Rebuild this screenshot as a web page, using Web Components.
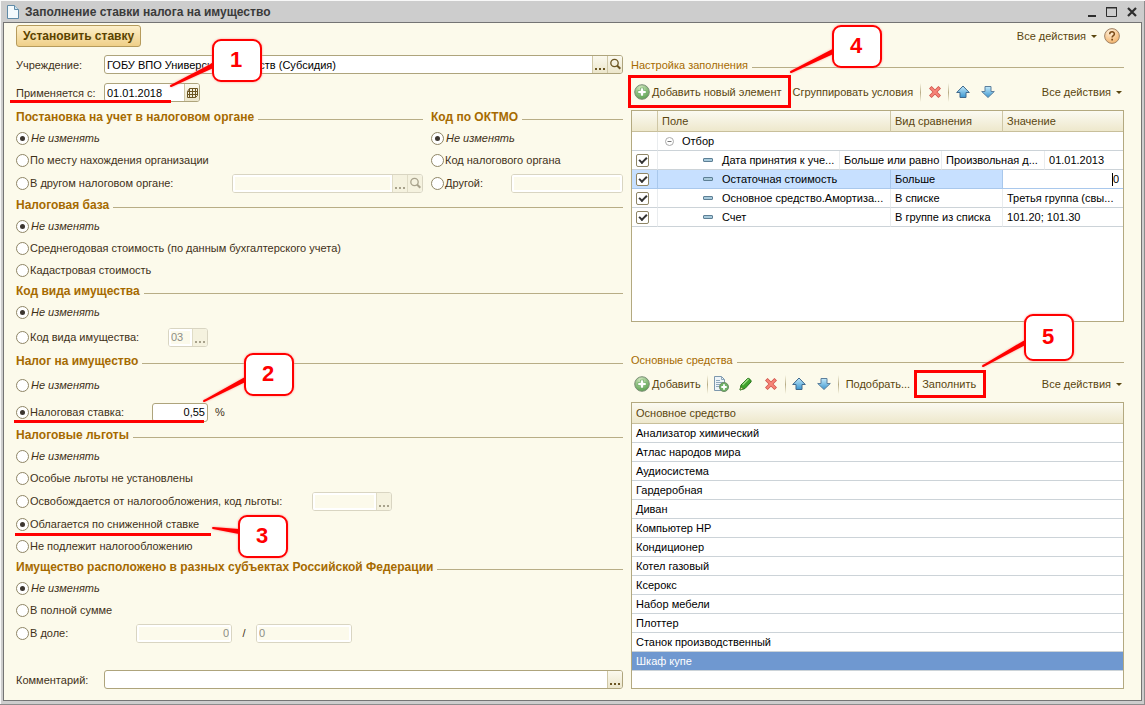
<!DOCTYPE html>
<html lang="ru">
<head>
<meta charset="utf-8">
<title>Заполнение ставки налога на имущество</title>
<style>
  body { margin: 0; font: 11px/14px "Liberation Sans", Arial, sans-serif; color: #3f3118; }
</style>
</head>
<body>
<tax-rate-page></tax-rate-page>

<script>
const ICONS = {
  page: '<svg width="16" height="16" viewBox="0 0 16 16"><path d="M2.500 1.500h7l4 4v9h-11z" fill="#f4fafd" stroke="#5f8ba8"/><path d="M9.500 1.500v4h4" fill="#cfe3ee" stroke="#5f8ba8"/></svg>',
  add: '<svg width="16" height="16" viewBox="0 0 16 16"><defs><radialGradient id="g" cx=".4" cy=".2" r=".9"><stop offset="0" stop-color="#cfe6bd"/><stop offset="1" stop-color="#4f9a45"/></radialGradient></defs><circle cx="8" cy="8" r="7.300" fill="url(#g)" stroke="#7d8f78"/><path d="M8 3.800v8.400M3.800 8h8.400" stroke="#4f9a45" stroke-width="3.600"/><path d="M8 4.200v7.600M4.200 8h7.600" stroke="#fff" stroke-width="2.600"/></svg>',
  copy: '<svg width="16" height="16" viewBox="0 0 16 16"><path d="M1.500.500h7l3 3v11h-10z" fill="#eef4f8" stroke="#7d98ad"/><path d="M8.500.500v3h3M3 4.500h4M3 6.500h7M3 8.500h6M3 10.500h3" fill="none" stroke="#8fa9bb"/><circle cx="11" cy="11" r="4.500" fill="#6fb266" stroke="#6d8b68"/><path d="M11 8.300v5.400M8.300 11h5.400" stroke="#fff" stroke-width="1.800"/></svg>',
  edit: '<svg width="16" height="16" viewBox="0 0 16 16"><path d="M2 14l1-5 6.500-6.500c1-1 4.500 2 3.500 3.500L7 12.500z" fill="#3fa32b" stroke="#26711a"/><path d="M4.500 9l6-6" stroke="#9bdc83" stroke-width="1.500"/><path d="M2 14l.8-3.200 2.600 2.200z" fill="#f0dca0" stroke="#26711a" stroke-width=".6"/></svg>',
  del: '<svg width="16" height="16" viewBox="0 0 16 16"><path d="M3.300 3.300l9.400 9.400M12.700 3.300l-9.400 9.400" stroke="#cf5249" stroke-width="3.600"/><path d="M3.800 3.800l8.400 8.400M12.200 3.800l-8.400 8.400" stroke="#f78478" stroke-width="2.200"/></svg>',
  up: '<svg width="16" height="16" viewBox="0 0 16 16"><defs><linearGradient id="u" x2="0" y2="1"><stop offset="0" stop-color="#c4eafa"/><stop offset="1" stop-color="#3b96d0"/></linearGradient></defs><path d="M8 2l6.300 6.500H11V13.500H5V8.500H1.700z" fill="url(#u)" stroke="#40698c"/></svg>',
  down: '<svg width="16" height="16" viewBox="0 0 16 16"><defs><linearGradient id="d" x2="0" y2="1"><stop offset="0" stop-color="#c4eafa"/><stop offset="1" stop-color="#3b96d0"/></linearGradient></defs><path d="M8 13.500l6.300-6H11V2.500H5v5H1.700z" fill="url(#d)" stroke="#5c7f9c"/></svg>',
  search: '<svg width="13" height="13" viewBox="0 0 13 13"><circle cx="5.500" cy="5" r="3.700" fill="none" stroke="currentColor" stroke-width="1.300"/><path d="M8 7.500l3.300 3.300" stroke="currentColor" stroke-width="2"/></svg>',
  calendar: '<svg width="11" height="12" viewBox="0 0 11 12"><path d="M2.500 1.500h8v7l-2 2h-8v-6zM.500 4.500h10M.500 7.500h10M2.500 1.500v9M5.500 1.500v9M8.500 1.500v9" fill="none" stroke="#6b5522"/></svg>',
  more: '<svg width="11" height="13" viewBox="0 0 11 13"><path d="M0 10h2v2H0zM4 10h2v2H4zM8 10h2v2H8z" fill="currentColor"/></svg>',
  help: '<svg width="16" height="16" viewBox="0 0 16 16"><defs><radialGradient id="h" cx=".4" cy=".25" r=".9"><stop offset="0" stop-color="#fff1dc"/><stop offset="1" stop-color="#f0a755"/></radialGradient></defs><circle cx="8" cy="8" r="7.400" fill="url(#h)" stroke="#a08468"/><path d="M5.700 6.300c0-3.200 4.700-3.200 4.700-.4 0 1.700-2.300 1.700-2.300 3.600" fill="none" stroke="#7c4b18" stroke-width="1.500"/><path d="M7.300 10.800h1.700v1.700H7.300z" fill="#7c4b18"/></svg>',
  minimize: '<svg width="12" height="12" viewBox="0 0 12 12"><path d="M2 9h8v2H2z" fill="#2d2d2d"/></svg>',
  maximize: '<svg width="12" height="12" viewBox="0 0 12 12"><path d="M.500 1.500h10v9H.500z" fill="none" stroke="#2d2d2d"/><path d="M0 1h11v1.500H0z" fill="#2d2d2d"/></svg>',
  close: '<svg width="12" height="12" viewBox="0 0 12 12"><path d="M2 2l8 8M10 2l-8 8" stroke="#2d2d2d" stroke-width="2.200"/></svg>'
};

const RESET = `
  *, *::before, *::after { box-sizing: border-box; }
  button { font: inherit; color: inherit; margin: 0; padding: 0; border: 0; background: none; white-space: nowrap; }
  input { font: inherit; color: inherit; margin: 0; }
  svg { display: block; flex: none; }
`;

class Base extends HTMLElement {
  connectedCallback() {
    if (this.shadowRoot) return;
    this.attachShadow({ mode: "open" }).innerHTML = `<style>${RESET}${this.css()}</style>${this.html()}`;
    this.ready();
  }
  ready() {}
  attr(name, fallback = "") { return this.getAttribute(name) ?? fallback; }
}

/* Window frame with a title bar */
customElements.define("app-window", class extends Base {
  css() { return `
    :host { display: flex; flex-direction: column; box-sizing: border-box; min-height: 100vh; padding: 0 3px 3px; background: #cdcdcd;
      border: 1px solid #8c8c8c; border-width: 0 0 1px; box-shadow: inset 1px 1px #f8f8f8, inset -1px 0 #8c8c8c; }
    header { display: flex; align-items: center; height: 22px; padding: 2px 4px 0 2px; gap: 4px; }
    h1 { flex: 1; margin: 0; font-size: 12px; line-height: 16px; font-weight: bold; color: #3a3a3a; }
    nav { display: flex; gap: 8px; }
    main { flex: 1; display: flex; flex-direction: column; background: #fcfaeb; border: 1px solid #747474; padding: 2px 17px 11px 12px; }`; }
  html() { return `
    <header>${ICONS.page}<h1>${this.attr("caption")}</h1>
      <nav><button aria-label="Свернуть">${ICONS.minimize}</button><button aria-label="Развернуть">${ICONS.maximize}</button><button aria-label="Закрыть">${ICONS.close}</button></nav>
    </header><main><slot></slot></main>`; }
});

/* Section caption followed by a rule */
customElements.define("form-group", class extends Base {
  css() { return `
    :host { display: flex; flex-direction: column; min-width: 0; }
    h2 { display: flex; align-items: center; gap: 4px; margin: 0; height: 20px; font-size: 12px; line-height: 16px; color: #a66a00; white-space: nowrap; }
    h2::after { content: ""; flex: 1; height: 1px; margin-top: 4px; background: #b8ad86; }
    :host([plain]) h2 { font-size: 11px; font-weight: normal; }`; }
  html() { return `<h2>${this.attr("caption")}</h2><slot></slot>`; }
});

customElements.define("radio-row", class extends Base {
  css() { return `
    :host { display: flex; align-items: center; height: 22px; }
    :host([size="field"]) { height: 24px; }
    :host([size="medium"]) { height: 26px; }
    :host([size="large"]) { height: 28px; }
    label { display: flex; align-items: center; gap: 1px; flex: none; width: var(--label, auto); white-space: nowrap; }
    :host([italic]) label { font-style: italic; gap: 2px; }
    input { appearance: none; width: 13px; height: 13px; border: 1px solid #8f8666; border-radius: 50%; background: #fff; display: grid; place-items: center; }
    input:checked::before { content: ""; width: 5px; height: 5px; border-radius: 50%; background: #3c3630; }
    ::slotted(span) { width: 24px; text-align: center; }`; }
  html() { return `<label><input type="radio" ${this.hasAttribute("checked") ? "checked" : ""}><span>${this.attr("label")}</span></label><slot></slot>`; }
  ready() {
    this.input = this.shadowRoot.querySelector("input");
    this.input.addEventListener("change", () => {
      for (const row of this.parentElement.querySelectorAll(":scope > radio-row")) if (row !== this) row.input.checked = false;
    });
  }
});

customElements.define("text-field", class extends Base {
  css() { return `
    :host { display: flex; align-items: center; min-width: 0; }
    label { flex: none; width: 88px; }
    .box { flex: 1; min-width: 0; display: flex; height: 19px; border: 1px solid #aea47c; border-radius: 3px; background: #fff; overflow: hidden; }
    input { flex: 1; width: 0; min-width: 0; border: 0; padding: 0 2px; outline: 0; background: none; color: #000; }
    :host([align="end"]) input { text-align: right; }
    button { flex: none; width: 15px; display: grid; place-items: center; color: #6b5522; border-left: 1px solid #cfc7a6; background: linear-gradient(#fbf9ee, #ece6cb); }
    :host([disabled]) .box { border-color: #d9d5c2; }
    :host([disabled]) input { color: #8d8d86; background: #fcfaeb; border: 2px solid #fff; padding: 0; }
    :host([disabled]) button { color: #a8a28c; background: #f5f2df; border-color: #e0dcc6; }`; }
  html() {
    const dis = this.hasAttribute("disabled") ? "disabled" : "";
    const names = { more: "Выбрать", search: "Открыть", calendar: "Календарь" };
    const buttons = this.attr("buttons").split(" ").filter(Boolean).map(b => `<button ${dis} aria-label="${names[b]}">${ICONS[b]}</button>`).join("");
    const label = this.attr("label");
    return `${label ? `<label for="f">${label}</label>` : ""}<div class="box"><input id="f" type="text" value="${this.attr("value")}" ${label ? "" : `aria-label="${this.attr("name")}"`} ${dis}>${buttons}</div>`;
  }
});

customElements.define("tool-button", class extends Base {
  css() { return `
    :host { display: flex; color: #5a460f; }
    button { display: flex; align-items: center; justify-content: center; height: 24px; padding: 0 6px; gap: 2px; }
    :host([icon]) button { padding: 0 5px 0 3px; }
    :host([icon]:not([label])) button { width: 25px; padding: 0; }
    :host([menu]) button { padding: 0 2px; gap: 5px; }
    :host([menu]) button::after { content: ""; border: 3px solid transparent; border-top-color: #5a460f; border-bottom: 0; }
    :host([main]) button { height: 22px; padding: 0 6px; font-size: 12px; font-weight: bold; color: #5a4300; border: 1px solid #b69b5c; border-radius: 3px; background: linear-gradient(#fdf0cb, #efcf88); }`; }
  html() { return `<button ${this.hasAttribute("label") ? "" : `aria-label="${this.attr("name")}"`}>${ICONS[this.attr("icon")] || ""}${this.attr("label")}</button>`; }
});

customElements.define("tool-bar", class extends Base {
  css() { return `
    :host { display: flex; align-items: center; height: 28px; margin-bottom: 4px; }
    ::slotted(hr) { width: 1px; height: 19px; margin: 0 1px; border: 0; background: linear-gradient(transparent, #b8ad86, transparent); }
    ::slotted([menu]) { margin-left: auto; }`; }
  html() { return `<slot></slot>`; }
});

const TABLE = `
  :host { display: block; box-sizing: border-box; border: 1px solid #b3a980; background: #fff; color: #000; }
  table { width: 100%; table-layout: fixed; border-spacing: 0; }
  th, td { height: 19px; padding: 0 0 0 4px; text-align: left; font-weight: normal; white-space: nowrap; border-bottom: 1px solid #ccd3d8; }
  th { height: 21px; color: #5a460f; background: linear-gradient(#fbfaf2, #eee8cc); border-color: #c8bf9b; }
`;

customElements.define("filter-table", class extends Base {
  css() { return TABLE + `
    th + th { border-left: 1px solid #cfc7a6; }
    td + td { border-left: 1px solid #e9ecee; }
    td:first-child { line-height: 0; }
    tr.sel td { background: #c7e0ff; border-color: #a9c8ec; }
    .group { display: flex; align-items: center; gap: 8px; padding-left: 3px; }
    .item { padding-left: 45px; }
    .item::before { content: ""; display: inline-block; width: 10px; height: 4px; margin-right: 9px; vertical-align: 2px; border: 1px solid #5d7f95; border-radius: 1px; background: #a9cbdc; }
    input[type=checkbox] { appearance: none; width: 13px; height: 13px; border: 1px solid #8f8666; border-radius: 2px; background: #fff; display: grid; place-items: center; }
    input[type=checkbox]:checked::before { content: ""; width: 8px; height: 5px; border: 2px solid #333; border-width: 0 0 2px 2px; transform: translateY(-1px) rotate(-45deg); }
    tr.sel td.edit { background: #fff; padding-right: 4px; }
    .edit div { display: flex; justify-content: flex-end; align-items: center; }
    .edit div::before { content: ""; width: 1px; height: 13px; background: #000; }
    .edit input { width: 6px; border: 0; padding: 0; height: 14px; }`; }
  html() {
    const check = n => `<td><input type="checkbox" checked aria-label="${n}"></td>`;
    return `<table>
      <colgroup><col style="width:25px"><col style="width:182px"><col style="width:51px"><col style="width:51px"><col style="width:61px"><col style="width:42px"><col></colgroup>
      <thead><tr><th></th><th colspan="2">Поле</th><th colspan="2">Вид сравнения</th><th colspan="2">Значение</th></tr></thead>
      <tbody>
        <tr><td></td><td colspan="6"><div class="group"><svg width="9" height="9" viewBox="0 0 9 9"><circle cx="4.500" cy="4.500" r="4" fill="#fff" stroke="#aaa"/><path d="M2.500 4.500h4" stroke="#777"/></svg>Отбор</div></td></tr>
        <tr>${check("Дата принятия к учету")}<td class="item">Дата принятия к уче...</td><td colspan="2">Больше или равно</td><td colspan="2">Произвольная д...</td><td>01.01.2013</td></tr>
        <tr class="sel">${check("Остаточная стоимость")}<td class="item" colspan="2">Остаточная стоимость</td><td colspan="2">Больше</td><td class="edit" colspan="2"><div><input type="text" value="0" aria-label="Значение"></div></td></tr>
        <tr>${check("Основное средство.Амортизационная группа")}<td class="item" colspan="2">Основное средство.Амортиза...</td><td colspan="2">В списке</td><td colspan="2">Третья группа (свы...</td></tr>
        <tr>${check("Счет")}<td class="item" colspan="2">Счет</td><td colspan="2">В группе из списка</td><td colspan="2">101.20; 101.30</td></tr>
      </tbody></table>`;
  }
});

customElements.define("asset-table", class extends Base {
  css() { return TABLE + `tr:last-child td { background: #6f98d0; color: #fff; }`; }
  html() {
    const rows = ["Анализатор химический", "Атлас народов мира", "Аудиосистема", "Гардеробная", "Диван", "Компьютер HP", "Кондиционер", "Котел газовый", "Ксерокс", "Набор мебели", "Плоттер", "Станок производственный", "Шкаф купе"];
    return `<table><thead><tr><th scope="col" class="h">Основное средство</th></tr></thead><tbody>${rows.map(r => `<tr><td>${r}</td></tr>`).join("")}</tbody></table>`;
  }
});

/* Numbered red callout; tip-x and tip-y are measured from the corner of the bubble */
customElements.define("note-callout", class extends Base {
  css() { return `
    :host { position: absolute; width: 50px; height: 43px; z-index: 2; }
    :host([tall]) { height: 47px; }
    svg { position: absolute; inset: 0; overflow: visible; filter: drop-shadow(0 0 1px #f99); }
    b { position: relative; display: block; padding-right: 2px; text-align: center; font-size: 22px; line-height: 42px; color: #f00; }
    :host([tall]) b { line-height: 46px; }`; }
  html() {
    const y = +this.attr("base", "26");
    const h = this.hasAttribute("tall") ? 47 : 43;
    return `<svg width="50" height="${h}" viewBox="0 0 50 ${h}"><path d="M1 ${y - 1}L${this.attr("tip-x")} ${this.attr("tip-y")}L1 ${y + 2}z" fill="#f00" stroke="#f00" stroke-width="2" stroke-linejoin="round"/><rect x="1" y="1" width="48" height="${h - 2}" rx="8" fill="#fff" stroke="#f00" stroke-width="2"/></svg><b>${this.attr("number")}</b>`;
  }
});

customElements.define("note-mark", class extends Base {
  css() { return `:host { position: absolute; box-sizing: border-box; border: 3px solid #f00; pointer-events: none; z-index: 1; } :host([line]) { border-width: 3px 0 0; }`; }
  html() { return ""; }
});

customElements.define("tax-rate-page", class extends Base {
  css() { return `
    :host { display: block; }
    .top { display: flex; align-items: center; height: 22px; margin-bottom: 8px; }
    .top tool-button[menu] { margin-left: auto; }
    .cols { flex: 1; display: grid; grid-template-columns: 607fr 493fr; gap: 8px; }
    .left, .right { position: relative; display: flex; flex-direction: column; min-width: 0; }
    .date { width: 184px; margin: 9px 0 5px; }
    .pair { display: grid; grid-template-columns: 407fr 192fr; gap: 8px; }
    .fill { flex: 1; }
    .comment { margin-top: auto; }
    .filter { margin-bottom: 28px; }
    .filter tool-bar { margin-top: 3px; }
    filter-table { min-height: 212px; }
    .assets, asset-table { flex: 1; }`; }
  html() { return `
  <app-window caption="Заполнение ставки налога на имущество">
    <div class="top"><tool-button main label="Установить ставку"></tool-button><tool-button menu label="Все действия"></tool-button><tool-button icon="help" name="Справка"></tool-button></div>
    <div class="cols">
      <div class="left">
        <text-field label="Учреждение:" value="ГОБУ ВПО Университет искусств (Субсидия)" buttons="more search"></text-field>
        <text-field class="date" label="Применяется с:" value="01.01.2018" buttons="calendar"></text-field>
        <div class="pair">
          <form-group caption="Постановка на учет в налоговом органе">
            <radio-row italic checked label="Не изменять"></radio-row>
            <radio-row label="По месту нахождения организации"></radio-row>
            <radio-row size="field" style="--label:216px" label="В другом налоговом органе:"><text-field class="fill" disabled name="Налоговый орган" buttons="more search"></text-field></radio-row>
          </form-group>
          <form-group caption="Код по ОКТМО">
            <radio-row italic checked label="Не изменять"></radio-row>
            <radio-row label="Код налогового органа"></radio-row>
            <radio-row size="field" style="--label:80px" label="Другой:"><text-field class="fill" disabled name="Код по ОКТМО"></text-field></radio-row>
          </form-group>
        </div>
        <form-group caption="Налоговая база">
          <radio-row italic checked label="Не изменять"></radio-row>
          <radio-row label="Среднегодовая стоимость (по данным бухгалтерского учета)"></radio-row>
          <radio-row label="Кадастровая стоимость"></radio-row>
        </form-group>
        <form-group caption="Код вида имущества">
          <radio-row italic checked label="Не изменять"></radio-row>
          <radio-row size="large" style="--label:152px" label="Код вида имущества:"><text-field style="width:40px" disabled name="Код вида имущества" value="03" buttons="more"></text-field></radio-row>
        </form-group>
        <form-group caption="Налог на имущество">
          <radio-row size="large" italic label="Не изменять"></radio-row>
          <radio-row size="medium" checked style="--label:136px" label="Налоговая ставка:"><text-field style="width:56px" align="end" name="Налоговая ставка" value="0,55"></text-field><span>%</span></radio-row>
        </form-group>
        <form-group caption="Налоговые льготы">
          <radio-row italic label="Не изменять"></radio-row>
          <radio-row label="Особые льготы не установлены"></radio-row>
          <radio-row size="field" style="--label:296px" label="Освобождается от налогообложения, код льготы:"><text-field style="width:80px" disabled name="Код льготы" buttons="more"></text-field></radio-row>
          <radio-row checked label="Облагается по сниженной ставке"></radio-row>
          <radio-row label="Не подлежит налогообложению"></radio-row>
        </form-group>
        <form-group caption="Имущество расположено в разных субъектах Российской Федерации">
          <radio-row italic checked label="Не изменять"></radio-row>
          <radio-row label="В полной сумме"></radio-row>
          <radio-row size="field" style="--label:120px" label="В доле:"><text-field style="width:96px" disabled align="end" name="Числитель" value="0"></text-field><span>/</span><text-field style="width:96px" disabled name="Знаменатель" value="0"></text-field></radio-row>
        </form-group>
        <text-field class="comment" label="Комментарий:" buttons="more"></text-field>
        <note-mark line style="left:-6px;top:45px;width:161px"></note-mark>
        <note-mark line style="left:-2px;top:365px;width:190px"></note-mark>
        <note-mark line style="left:-1px;top:478px;width:196px"></note-mark>
        <note-callout number="1" tip-x="-41" tip-y="47" style="left:196px;top:-16px"></note-callout>
        <note-callout number="2" tip-x="-40" tip-y="48" style="left:228px;top:298px"></note-callout>
        <note-callout number="3" tip-x="-25" tip-y="13" base="16" style="left:222px;top:460px"></note-callout>
      </div>
      <div class="right">
        <form-group class="filter" plain caption="Настройка заполнения">
          <tool-bar>
            <tool-button icon="add" label="Добавить новый элемент"></tool-button><tool-button label="Сгруппировать условия"></tool-button><hr>
            <tool-button icon="del" name="Удалить"></tool-button><hr>
            <tool-button icon="up" name="Переместить вверх"></tool-button><tool-button icon="down" name="Переместить вниз"></tool-button>
            <tool-button menu label="Все действия"></tool-button>
          </tool-bar>
          <filter-table></filter-table>
        </form-group>
        <form-group class="assets" plain caption="Основные средства">
          <tool-bar>
            <tool-button icon="add" label="Добавить"></tool-button><hr>
            <tool-button icon="copy" name="Скопировать"></tool-button><tool-button icon="edit" name="Изменить"></tool-button><tool-button icon="del" name="Удалить"></tool-button><hr>
            <tool-button icon="up" name="Переместить вверх"></tool-button><tool-button icon="down" name="Переместить вниз"></tool-button><hr>
            <tool-button label="Подобрать..."></tool-button><tool-button label="Заполнить"></tool-button>
            <tool-button menu label="Все действия"></tool-button>
          </tool-bar>
          <asset-table></asset-table>
        </form-group>
        <note-mark style="left:-3px;top:20px;width:163px;height:33px"></note-mark>
        <note-mark style="left:283px;top:315px;width:72px;height:28px"></note-mark>
        <note-callout number="4" tip-x="-41" tip-y="47" style="left:201px;top:-30px"></note-callout>
        <note-callout number="5" tall tip-x="-41" tip-y="52" base="28" style="left:393px;top:259px"></note-callout>
      </div>
    </div>
  </app-window>`; }
});
</script>
</body>
</html>
